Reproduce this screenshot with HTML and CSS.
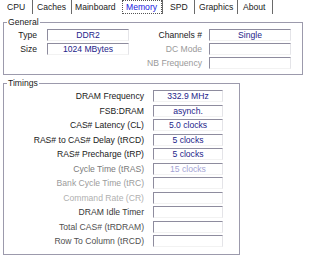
FILE: index.html
```html
<!DOCTYPE html>
<html>
<head>
<meta charset="utf-8">
<link rel="stylesheet" href="styles.css">
</head>
<body>
<div class="tabs">
  <span class="tab t-cpu sep">CPU</span>
  <span class="tab t-caches sep">Caches</span>
  <span class="tab t-main">Mainboard</span>
  <span class="tab t-mem">Memory</span>
  <span class="bar"></span>
  <span class="tab t-spd sep">SPD</span>
  <span class="tab t-gfx sep">Graphics</span>
  <span class="tab t-about sep">About</span>
</div>

<fieldset class="group general">
  <legend>General</legend>
  <div class="gen-grid">
    <span class="lbl">Type</span>
    <span class="val">DDR2</span>
    <span class="lbl">Channels #</span>
    <span class="val">Single</span>

    <span class="lbl">Size</span>
    <span class="val">1024 MBytes</span>
    <span class="lbl dis">DC Mode</span>
    <span class="val"></span>

    <span></span>
    <span></span>
    <span class="lbl dis">NB Frequency</span>
    <span class="val"></span>
  </div>
</fieldset>

<fieldset class="group timings">
  <legend>Timings</legend>
  <div class="tim-grid">
    <span class="lbl">DRAM Frequency</span><span class="val">332.9 MHz</span>
    <span class="lbl">FSB:DRAM</span><span class="val">asynch.</span>
    <span class="lbl">CAS# Latency (CL)</span><span class="val">5.0 clocks</span>
    <span class="lbl">RAS# to CAS# Delay (tRCD)</span><span class="val">5 clocks</span>
    <span class="lbl">RAS# Precharge (tRP)</span><span class="val">5 clocks</span>
    <span class="lbl c1">Cycle Time (tRAS)</span><span class="val light">15 clocks</span>
    <span class="lbl c2">Bank Cycle Time (tRC)</span><span class="val"></span>
    <span class="lbl c3">Command Rate (CR)</span><span class="val"></span>
    <span class="lbl c4">DRAM Idle Timer</span><span class="val"></span>
    <span class="lbl c5">Total CAS# (tRDRAM)</span><span class="val"></span>
    <span class="lbl c5">Row To Column (tRCD)</span><span class="val"></span>
  </div>
</fieldset>
</body>
</html>
```

FILE: styles.css
```css
* { box-sizing: border-box; }

html, body {
  margin: 0;
  padding: 0;
  background: #ffffff;
}

body {
  width: 310px;
  height: 265px;
  overflow: hidden;
  font-family: "Liberation Sans", Arial, sans-serif;
  font-size: 8.6px;
  color: #1a1a1a;
}

/* ---------- tabs ---------- */
.tabs {
  display: flex;
  height: 14px;
  padding-left: 7px;
}

.tab {
  display: block;
  height: 14px;
  line-height: 14px;
  white-space: nowrap;
  color: #1a1a1a;
}

.sep {
  border-right: 1px solid #6a6a6a;
}

.t-cpu { width: 26px; }
.t-caches { width: 39px; padding-left: 4px; }
.t-main { width: 50px; padding-left: 3px; }
.t-mem {
  width: 40px;
  padding-left: 3px;
  border: 1px dotted #555;
  line-height: 12px;
  color: #2020e0;
}
.bar {
  width: 1px;
  height: 14px;
  background: #6a6a6a;
}
.t-spd { width: 32px; padding-left: 7px; }
.t-gfx { width: 43px; padding-left: 4px; }
.t-about { width: 35px; padding-left: 5px; }

/* ---------- group boxes ---------- */
.group {
  border: 1px solid #9c9aac;
  padding: 0;
  margin: 0;
}

.group legend {
  padding: 0 1px;
  margin-left: 3px;
  line-height: 10px;
  height: 10px;
  color: #1a1a1a;
}

.general {
  margin: 3px 7px 0 3px;
  padding: 2px 0 5px 0;
}

.timings {
  margin: 3px 70px 0 3px;
  padding: 2px 0 7px 0;
}

.lbl {
  text-align: right;
  white-space: nowrap;
  line-height: 12px;
  color: #1a1a1a;
}

.lbl.dis { color: #9a9a9a; }

.val {
  height: 12px;
  line-height: 10px;
  text-align: center;
  white-space: nowrap;
  color: #24248a;
  background: #ffffff;
  border-style: solid;
  border-width: 1px;
  border-color: #8e8c9e #e4e4e8 #f2f2f2 #8e8c9e;
}

.val.light { color: #a4a4d4; }

.gen-grid {
  display: grid;
  grid-template-columns: 33px 82px 73px 82px;
  column-gap: 0;
  row-gap: 2px;
  grid-auto-rows: 12px;
}

.gen-grid > :nth-child(4n+2) { margin-left: 10px; width: 82px; }
.gen-grid > :nth-child(4n+4) { margin-left: 7px; width: 82px; }
.gen-grid { grid-template-columns: 33px 92px 73px 89px; }

.tim-grid {
  display: grid;
  grid-template-columns: 140px 70px;
  column-gap: 9px;
  row-gap: 2.5px;
  grid-auto-rows: 12px;
}

.c1 { color: #7a7a7a; }
.c2 { color: #9c9c9c; }
.c3 { color: #b0b0b0; }
.c4 { color: #383838; }
.c5 { color: #505050; }
```
